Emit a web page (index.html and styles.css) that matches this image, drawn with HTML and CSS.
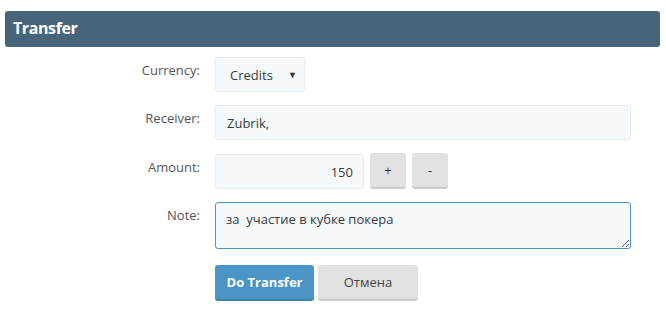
FILE: index.html
```html
<!DOCTYPE html>
<html lang="ru">
<head>
    <meta charset="UTF-8">
    <meta name="viewport" content="width=device-width, initial-scale=1.0">
    <title>Transfer</title>
    <link rel="stylesheet" href="styles.css">
</head>
<body>
    <div class="panel">
        <h1 class="panel-title">Transfer</h1>

        <form class="transfer-form">
            <div class="row">
                <label class="label" for="currency">Currency:</label>
                <span class="select-wrap">
                    <select id="currency" class="field select">
                        <option value="credits">Credits</option>
                    </select>
                </span>
            </div>
            <div class="row row-receiver">
                <label class="label" for="receiver">Receiver:</label>
                <input id="receiver" class="field wide" type="text" value="Zubrik,">
            </div>
            <div class="row">
                <label class="label" for="amount">Amount:</label>
                <input id="amount" class="field amount" type="text" value="150">
                <button type="button" class="btn btn-small">+</button>
                <button type="button" class="btn btn-small">-</button>
            </div>
            <div class="row">
                <label class="label" for="note">Note:</label>
                <textarea id="note" class="field wide note" autofocus>за  участие в кубке покера</textarea>
            </div>
            <div class="row actions">
                <span class="label"></span>
                <button type="button" class="btn btn-primary">Do Transfer</button>
                <button type="button" class="btn btn-cancel">Отмена</button>
            </div>
        </form>
    </div>
</body>
</html>
```

FILE: styles.css
```css
body {
    margin: 0;
    background-color: white;
    font-family: "Open Sans", Arial, sans-serif;
    font-size: 13px;
    color: #333;
}
.panel {
    margin: 11px 6px 0 5px;
}
.panel-title {
    margin: 0;
    height: 36px;
    line-height: 35px;
    padding-left: 8px;
    background-color: #46657b;
    color: white;
    font-size: 16px;
    font-weight: bold;
    letter-spacing: -0.4px;
    border-radius: 3px;
}
.transfer-form {
    padding-top: 10px;
}
.row {
    display: flex;
    align-items: flex-start;
    margin-bottom: 13px;
}
.row-receiver {
    margin-bottom: 14px;
}
.label {
    flex: 0 0 195px;
    padding-top: 4px;
    padding-right: 15px;
    text-align: right;
    color: #555;
    line-height: 18px;
}
.field {
    box-sizing: border-box;
    height: 35px;
    padding: 0 11px;
    font-family: inherit;
    font-size: 13px;
    color: #3a3a3a;
    background-color: #f5f9fc;
    border: 1px solid #e6ecf0;
    border-radius: 3px;
    outline: none;
}
.select-wrap {
    position: relative;
    display: inline-block;
}
.select-wrap::after {
    content: "▼";
    position: absolute;
    right: 8px;
    top: 11px;
    font-size: 9px;
    color: #333;
    pointer-events: none;
}
.select {
    width: 90px;
    padding-left: 14px;
    appearance: none;
    -webkit-appearance: none;
}
.wide {
    width: 416px;
}
.amount {
    width: 149px;
    text-align: right;
    padding-right: 10px;
}
.note {
    height: 47px;
    padding: 7px 10px 4px;
    line-height: 18px;
    border-color: #4a96c8;
    resize: vertical;
}
.btn {
    box-sizing: border-box;
    height: 36px;
    font-family: inherit;
    font-size: 13px;
    border: none;
    border-radius: 3px;
    cursor: pointer;
}
.btn-small {
    width: 36px;
    margin-left: 6px;
    margin-top: -1px;
    background-color: #e1e1e1;
    border-bottom: 2px solid #cbcbcb;
    color: #333;
    padding: 0;
}
.actions {
    padding-top: 3px;
}
.btn-primary {
    width: 99px;
    background-color: #4a94c6;
    border-bottom: 2px solid #3f82b0;
    color: white;
    font-weight: bold;
}
.btn-cancel {
    width: 100px;
    margin-left: 4px;
    background-color: #e1e1e1;
    border-bottom: 2px solid #cbcbcb;
    color: #444;
}
```
